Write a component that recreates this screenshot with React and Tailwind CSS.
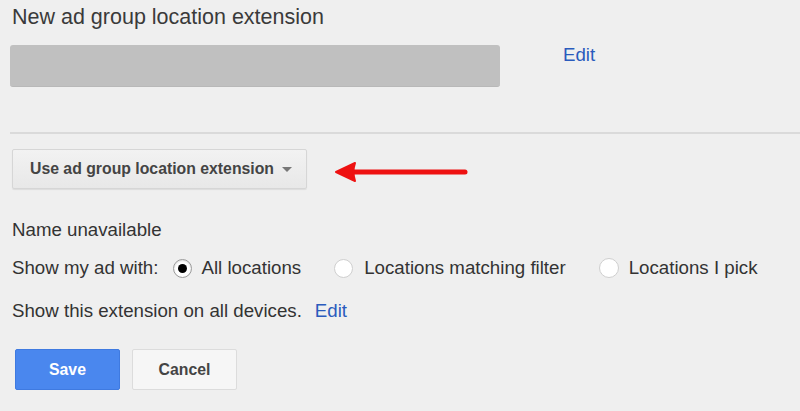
export default function App() {
  const font = { fontFamily: '"Liberation Sans", Arial, sans-serif' };

  return (
    <div className="w-[800px] h-[411px] bg-[#efefef] overflow-hidden text-[#333]" style={font}>
      {/* header */}
      <div className="pl-[12px] pt-[5px]">
        <h1 className="text-[21.5px] leading-[24px] text-[#3a3a3a]">New ad group location extension</h1>
      </div>
      <div className="flex items-start pl-[10px] pt-[16px]">
        <div className="w-[490px] h-[42px] rounded-[3px] bg-[#c0c0c0] border-b border-[#b8b8b8]" />
        <a className="ml-[63px] mt-[-4px] text-[18.7px] text-[#2a5bbd]">Edit</a>
      </div>

      <div className="ml-[10px] mt-[45px] h-[2px] bg-[#dadada]" />

      {/* dropdown + arrow */}
      <div className="flex items-center pl-[12px] pt-[15px]">
        <button className="h-[40px] w-[295px] flex items-center pl-[17px] rounded-[2px] border border-[#d6d6d6] bg-gradient-to-b from-[#f2f2f2] to-[#e8e8e8] shadow-[0_1px_1px_rgba(0,0,0,0.08)]">
          <span className="text-[15.8px] font-bold text-[#444]">Use ad group location extension</span>
          <svg width="10" height="6" viewBox="0 0 10 6" className="ml-[8px] mt-[1px]">
            <path d="M0 0 L10 0 L5 5 Z" fill="#777" />
          </svg>
        </button>
        <svg width="136" height="22" viewBox="0 0 136 22" className="ml-[28px] mt-[6px]">
          <path d="M14 11 L130 11" stroke="#ee1111" strokeWidth="5" strokeLinecap="round" />
          <path d="M1 11 L20 2 Q17 11 20 20 Z" fill="#ee1111" stroke="#ee1111" strokeWidth="2" strokeLinejoin="round" />
        </svg>
      </div>

      {/* settings */}
      <div className="pl-[12px] pt-[30px] text-[18.7px]">
        <div className="leading-[22px]">Name unavailable</div>
        <div className="flex items-center mt-[16px] h-[22px]">
          <span>Show my ad with:</span>
          <span className="ml-[15px] w-[19px] h-[19px] rounded-full border border-[#9a9a9a] bg-white flex items-center justify-center shadow-[inset_0_1px_2px_rgba(0,0,0,0.15)]">
            <span className="w-[9px] h-[9px] rounded-full bg-black" />
          </span>
          <span className="ml-[9px]">All locations</span>
          <span className="ml-[33px] w-[19px] h-[19px] rounded-full border border-[#cfcfcf] bg-white" />
          <span className="ml-[11px]">Locations matching filter</span>
          <span className="ml-[33px] w-[20px] h-[20px] rounded-full border border-[#cfcfcf] bg-white" />
          <span className="ml-[10px]">Locations I pick</span>
        </div>
        <div className="flex items-center mt-[21px] h-[22px]">
          <span>Show this extension on all devices.</span>
          <a className="ml-[13px] text-[#2a5bbd]">Edit</a>
        </div>
      </div>

      {/* buttons */}
      <div className="flex pl-[15px] pt-[27px] gap-[12px]">
        <button className="w-[105px] h-[41px] rounded-[2px] bg-[#4a87ee] border border-[#3f7ae0] text-white text-[15.8px] font-bold">
          Save
        </button>
        <button className="w-[105px] h-[41px] rounded-[2px] bg-[#f6f6f6] border border-[#dcdcdc] text-[#444] text-[15.8px] font-bold">
          Cancel
        </button>
      </div>
    </div>
  );
}
